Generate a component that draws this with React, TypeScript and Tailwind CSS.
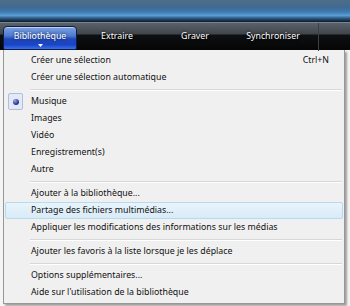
import React from "react";

type Item = { label: string; shortcut?: string; radio?: boolean; hover?: boolean } | "sep";

const items: Item[] = [
  { label: "Créer une sélection", shortcut: "Ctrl+N" },
  { label: "Créer une sélection automatique" },
  "sep",
  { label: "Musique", radio: true },
  { label: "Images" },
  { label: "Vidéo" },
  { label: "Enregistrement(s)" },
  { label: "Autre" },
  "sep",
  { label: "Ajouter à la bibliothèque..." },
  { label: "Partage des fichiers multimédias...", hover: true },
  { label: "Appliquer les modifications des informations sur les médias" },
  "sep",
  { label: "Ajouter les favoris à la liste lorsque je les déplace" },
  "sep",
  { label: "Options supplémentaires..." },
  { label: "Aide sur l'utilisation de la bibliothèque" },
];

function Tab({ label, active }: { label: string; active?: boolean }) {
  if (active) {
    return (
      <div className="relative ml-[3px] mt-[3px] flex h-[24px] w-[74px] items-center justify-center rounded-t-[4px] rounded-b-[2px] border border-[#0b1d4a] bg-[linear-gradient(#7da3e0_0%,#4f7bd0_40%,#1f48b8_55%,#1a44c4_80%,#3a6ff0_100%)] shadow-[inset_0_1px_0_rgba(255,255,255,0.5)]">
        <span className="mb-[3px] text-white [text-shadow:0_0_3px_rgba(0,0,40,0.8)]">{label}</span>
        <svg className="absolute bottom-[2px] left-[34px]" width="5" height="3" viewBox="0 0 5 3">
          <path d="M0 0 L5 0 L2.5 3 Z" fill="#ffffff" />
        </svg>
      </div>
    );
  }
  return (
    <div className="flex h-[28px] items-center justify-center">
      <span className="mb-[1px] text-white [text-shadow:0_0_3px_rgba(0,0,0,0.9)]">{label}</span>
    </div>
  );
}

export default function App() {
  return (
    <div className="relative h-[306px] w-[350px] overflow-hidden bg-[#f4f4f4] font-['Noto_Sans',sans-serif] text-[8.8px] leading-none">
      {/* window top strip */}
      <div className="h-[22px] bg-[linear-gradient(#4f6d88_0%,#3f6a92_35%,#3e7cb4_55%,#5d9fd2_70%,#27507a_85%,#0c1a28_100%)]" />
      {/* tab bar */}
      <div className="flex h-[28px] border-t border-[#7d838b] bg-[linear-gradient(#5b6169_0%,#41464d_40%,#0f1012_45%,#050505_100%)]">
        <Tab label="Bibliothèque" active />
        <div className="w-[80px]"><Tab label="Extraire" /></div>
        <div className="w-[76px]"><Tab label="Graver" /></div>
        <div className="w-[80px]"><Tab label="Synchroniser" /></div>
        <div className="ml-[5px] h-[28px] w-px bg-[#3c4046]" />
      </div>
      {/* dropdown menu */}
      <div className="ml-[3px] w-[342px] border border-t-0 border-[#979797] bg-[#f0f0f0] py-[2px] shadow-[2px_2px_2px_rgba(0,0,0,0.35)]">
        {items.map((it, i) =>
          it === "sep" ? (
            <div key={i} className="flex h-[7px] items-center pl-[26px] pr-[2px]">
              <div className="h-[2px] w-full border-t border-b border-t-[#d7d7d7] border-b-[#ffffff]" />
            </div>
          ) : (
            <div
              key={i}
              className={
                "relative flex h-[17px] items-center pr-[15px] text-[#111] " +
                (it.hover
                  ? "mx-[1px] rounded-[2px] border border-[#b6dbef] bg-[linear-gradient(#e9f4fb,#d8ebf7)] pl-[25px]"
                  : "pl-[27px]")
              }
            >
              {it.radio && (
                <div className="absolute left-[4px] top-[0px] flex h-[17px] w-[15px] items-center justify-center rounded-[2px] border border-[#aebde0] bg-[#e4e9f6]">
                  <div className="h-[6px] w-[6px] rounded-full bg-[radial-gradient(circle_at_35%_30%,#9aa8e8,#2b3a94_60%,#1a2470)]" />
                </div>
              )}
              <span className="flex-1">{it.label}</span>
              {it.shortcut && <span>{it.shortcut}</span>}
            </div>
          )
        )}
      </div>
    </div>
  );
}
